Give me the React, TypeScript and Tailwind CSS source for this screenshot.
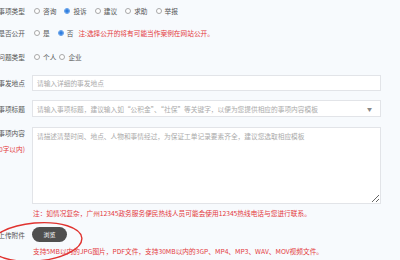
import React from "react";

const font = { fontFamily: '"Noto Sans CJK SC", "Noto Sans", sans-serif' };

function Radio({ checked, label, mr = "mr-[8px]" }: { checked?: boolean; label: string; mr?: string }) {
  return (
    <label className={`flex items-center gap-[3px] ${mr}`}>
      {checked ? (
        <span className="flex h-[6px] w-[6px] items-center justify-center rounded-full border border-[#5a9be8] bg-white">
          <span className="h-[4px] w-[4px] rounded-full bg-[#2f7ee0]" />
        </span>
      ) : (
        <span className="h-[6px] w-[6px] rounded-full border border-[#a8a8a8] bg-white" />
      )}
      <span>{label}</span>
    </label>
  );
}

function Label({ children }: { children: React.ReactNode }) {
  return (
    <div className="flex w-[25px] shrink-0 justify-end whitespace-nowrap text-[#555]">
      <span>{children}</span>
    </div>
  );
}

export default function App() {
  return (
    <div
      className="relative h-[260px] w-[400px] overflow-hidden bg-[#f7fafd] text-[6.7px] leading-[10px] text-[#555]"
      style={font}
    >
      <div className="flex h-[22px] items-center">
        <Label>事项类型</Label>
        <div className="ml-[9px] flex items-center">
          <Radio label="咨询" />
          <Radio checked label="投诉" />
          <Radio label="建议" />
          <Radio label="求助" />
          <Radio label="举报" />
        </div>
      </div>

      <div className="flex h-[22px] items-center">
        <Label>是否公开</Label>
        <div className="ml-[9px] flex items-center">
          <Radio label="是" />
          <Radio checked label="否" mr="mr-[5px]" />
          <span className="text-[#e4393c]">注:选择公开的将有可能当作案例在网站公开。</span>
        </div>
      </div>

      <div className="mt-[2px] flex h-[22px] items-center">
        <Label>问题类型</Label>
        <div className="ml-[9px] flex items-center">
          <Radio label="个人" mr="mr-[3px]" />
          <Radio label="企业" />
        </div>
      </div>

      <div className="mt-[7px] flex h-[16px] items-center">
        <Label>事发地点</Label>
        <div className="ml-[7px] flex h-full w-[349px] items-center border border-[#e2e4e8] bg-white pl-[4px] text-[#aaa]">
          请输入详细的事发地点
        </div>
      </div>

      <div className="mt-[9px] flex h-[17px] items-center">
        <Label>事项标题</Label>
        <div className="ml-[7px] flex h-full w-[349px] items-center justify-between border border-[#e2e4e8] bg-white pl-[4px] pr-[8px] text-[#aaa]">
          <span>请输入事项标题，建议输入如“公积金”、“社保”等关键字，以便为您提供相应的事项内容模板</span>
          <span className="text-[5px] text-[#888]">▼</span>
        </div>
      </div>

      <div className="mt-[10px] flex h-[77px]">
        <div className="flex w-[25px] shrink-0 flex-col items-end gap-[6px] whitespace-nowrap pt-[1px]">
          <span className="text-[#555]">事项内容</span>
          <span className="text-[#e4393c]">(500字以内)</span>
        </div>
        <textarea
          className="ml-[7px] h-full w-[349px] border border-[#e2e4e8] bg-white px-[4px] pt-[3px] text-[6.7px] leading-[10px] text-[#555] outline-none placeholder:text-[#aaa]"
          style={font}
          placeholder="请描述清楚时间、地点、人物和事情经过，为保证工单记录要素齐全，建议您选取相应模板"
        />
      </div>

      <div className="mt-[4px] pl-[33px] text-[#e4393c]">
        注：如情况复杂，广州12345政务服务便民热线人员可能会使用12345热线电话与您进行联系。
      </div>

      <div className="mt-[9px] flex h-[15px] items-center">
        <Label>上传附件</Label>
        <button className="ml-[7px] flex h-full w-[35px] items-center justify-center rounded-full bg-[#4f4f4f] text-[6px] text-white">
          浏览
        </button>
      </div>

      <div className="mt-[4px] pl-[33px] text-[#e4393c]">
        支持5MB以内的JPG图片，PDF文件，支持30MB以内的3GP、MP4、MP3、WAV、MOV视频文件。
      </div>

      <svg className="pointer-events-none absolute left-0 top-[210px]" width="100" height="50" viewBox="0 0 100 50">
        <ellipse cx="36" cy="32" rx="46" ry="19" fill="none" stroke="#e0322f" strokeWidth="1.4" transform="rotate(-5 36 32)" />
      </svg>
    </div>
  );
}
